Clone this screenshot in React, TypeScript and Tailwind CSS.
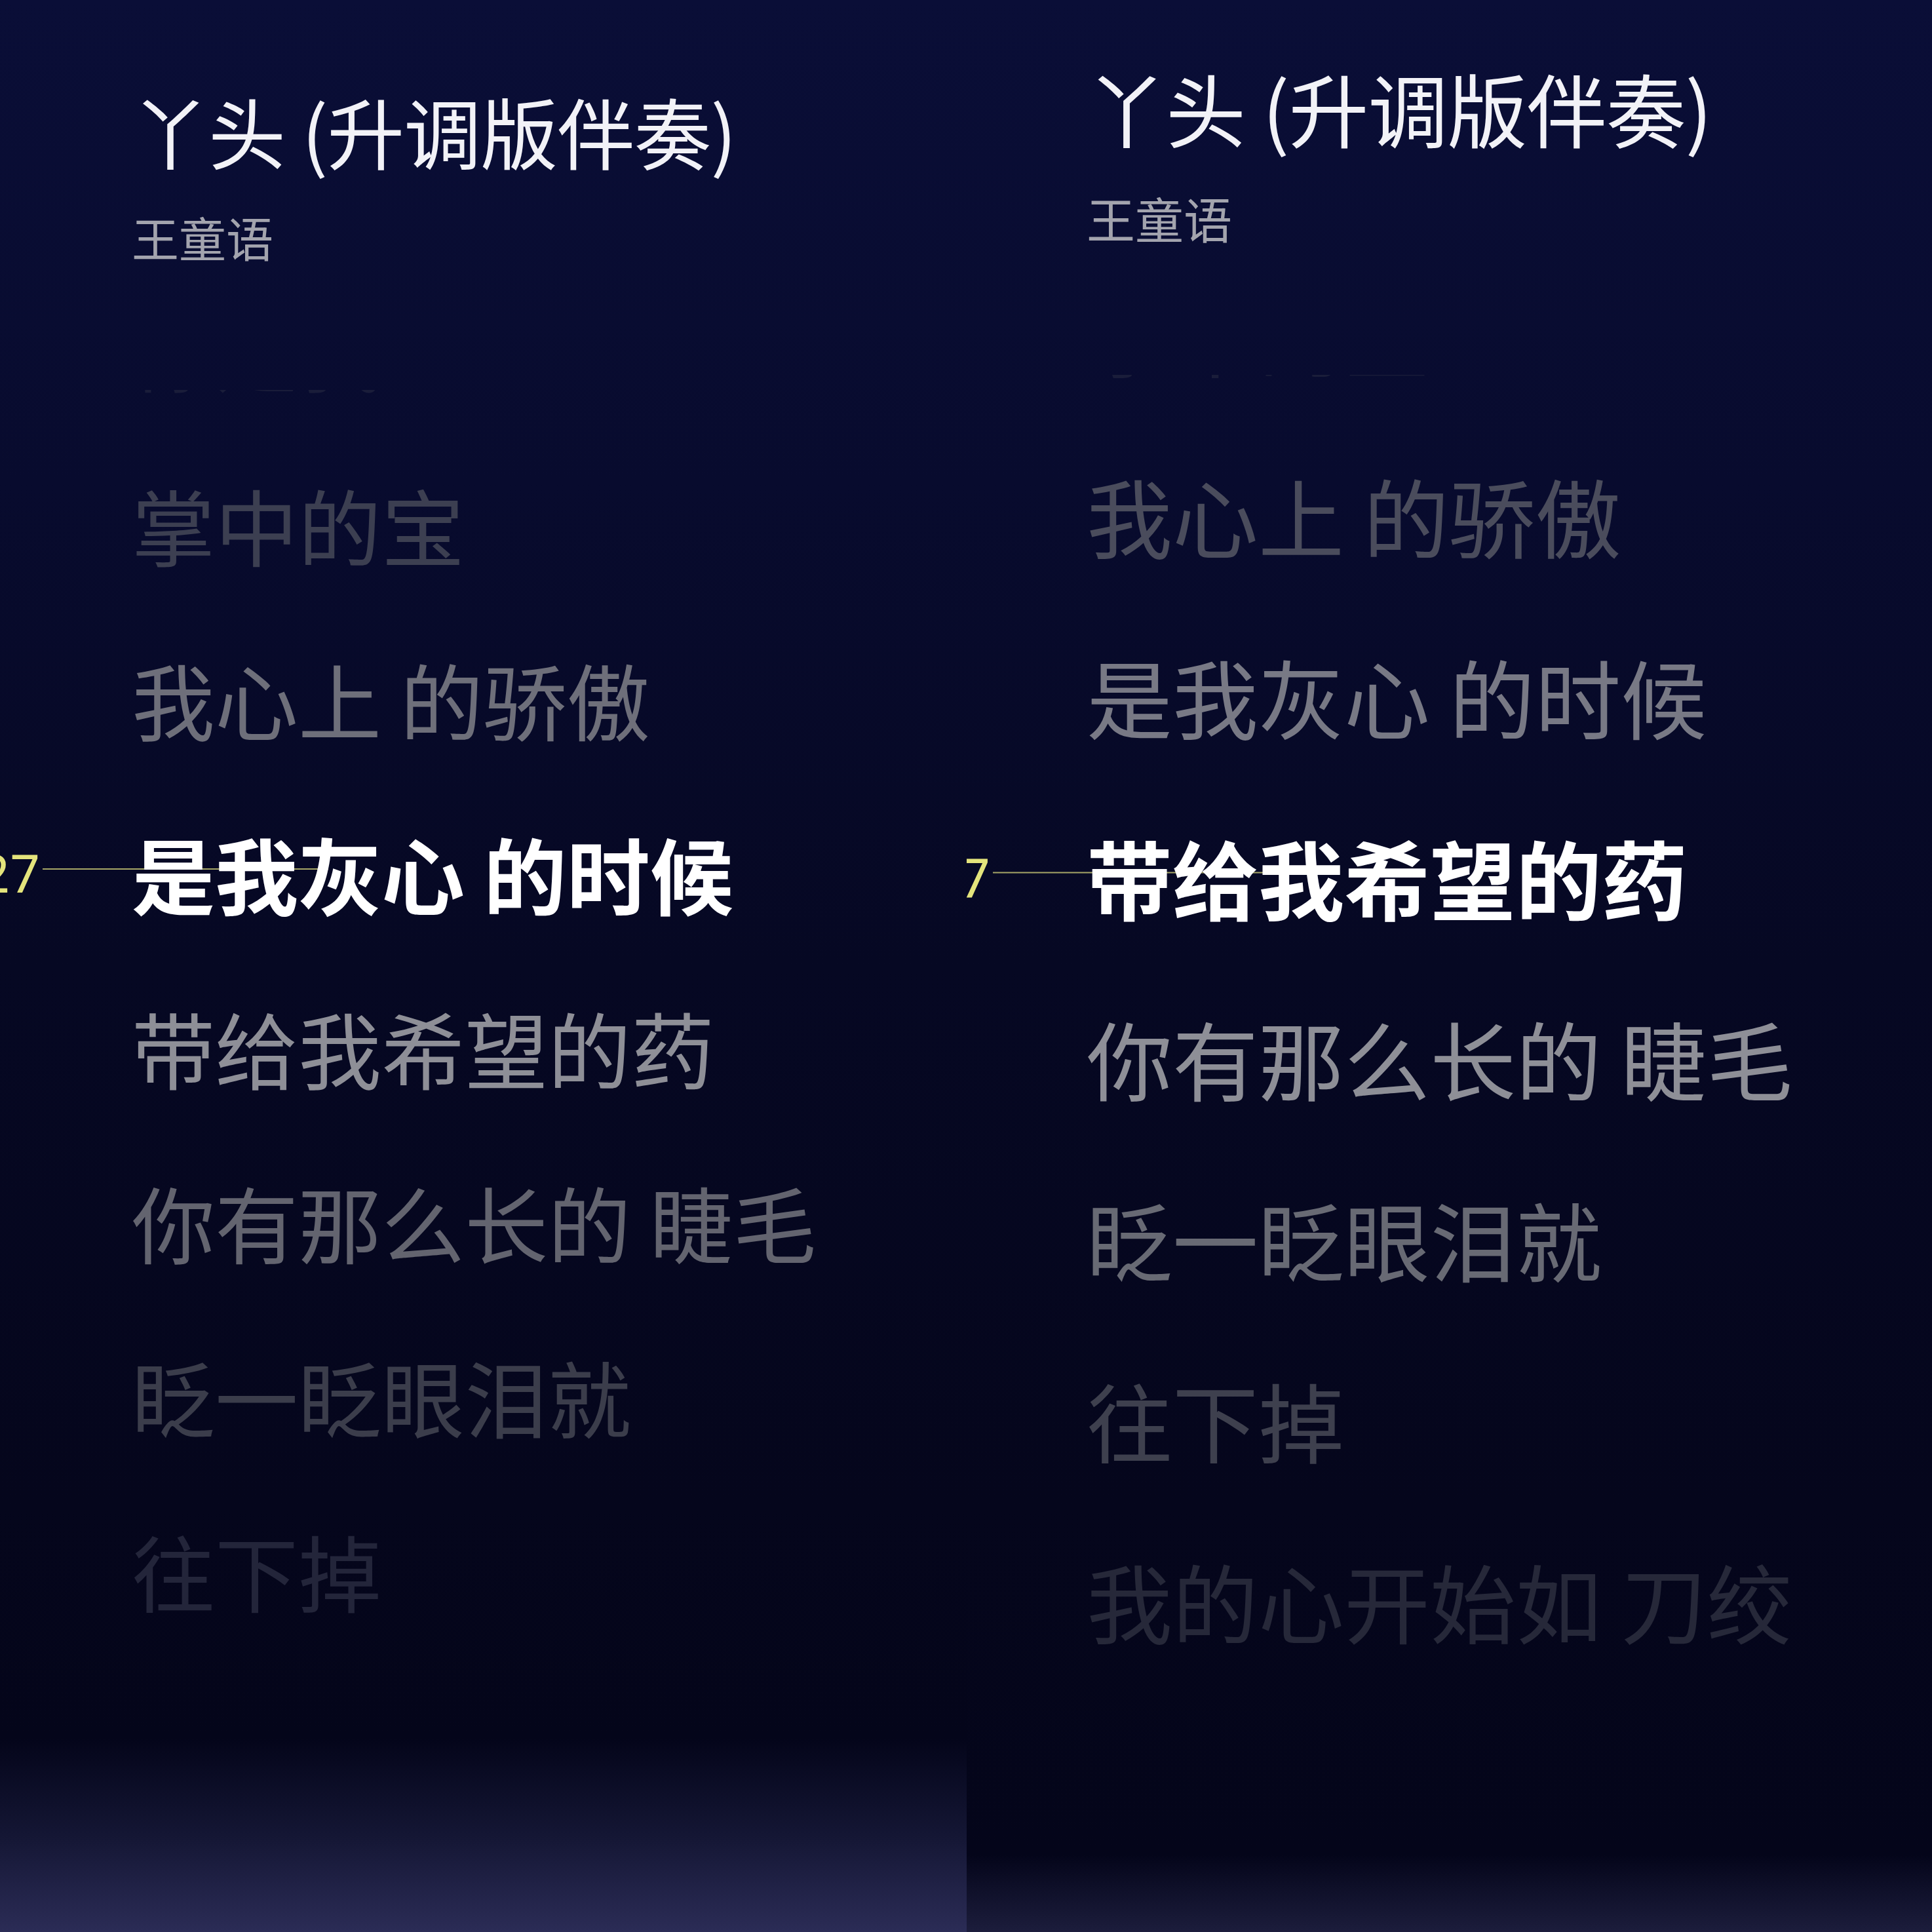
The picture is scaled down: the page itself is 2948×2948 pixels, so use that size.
import React from 'react';

interface PanelConfig {
    width: string;
    bg: string;
    header: string;
    title: string;
    artist: string;
    viewport: string;
    list: string;
    line: string;
    marker: string;
    stamp: string;
    rule: string;
    lines: { text: string; color: string }[];
    active: number;
    time: string;
}

const FONT = "font-['Noto_Sans_CJK_SC','Noto_Sans',sans-serif]";

const panels: PanelConfig[] = [
    {
        width: 'w-[1475px]',
        bg: 'bg-[linear-gradient(180deg,#0a0e37_0%,#080b2e_25%,#060823_50%,#05061c_78%,#04051a_90%,#141634_95%,#2b2c56_100%)]',
        header: 'pl-[201px] pt-[127px]',
        title: 'text-[118px] leading-[144px] tracking-[-1px]',
        artist: 'mt-[47px] text-[72px] leading-[86px]',
        viewport: 'mt-[191px] pl-[201px]',
        list: '-mt-[194px]',
        line: 'h-[266px] text-[127px] leading-[266px]',
        marker: 'right-full -mr-[300px]',
        stamp: 'text-[80px] mr-[4px]',
        rule: 'w-[436px]',
        lines: [
            { text: '你是我', color: 'text-[#1a1d3a]' },
            { text: '掌中的宝', color: 'text-[#3c3f51]' },
            { text: '我心上 的骄傲', color: 'text-[#6e6f7a]' },
            { text: '是我灰心 的时候', color: 'text-white' },
            { text: '带给我希望的药', color: 'text-[#8e8f97]' },
            { text: '你有那么长的 睫毛', color: 'text-[#63646f]' },
            { text: '眨一眨眼泪就', color: 'text-[#3b3d4b]' },
            { text: '往下掉', color: 'text-[#23253a]' },
        ],
        active: 3,
        time: '0:27',
    },
    {
        width: 'w-[1473px]',
        bg: 'bg-[linear-gradient(180deg,#0a0e37_0%,#080b2e_25%,#060823_50%,#05061c_78%,#04051a_96%,#1c1d3c_100%)]',
        header: 'pl-[183px] pt-[88px]',
        title: 'text-[122px] leading-[149px] tracking-[-1px]',
        artist: 'mt-[50px] text-[74px] leading-[89px]',
        viewport: 'mt-[196px] pl-[183px]',
        list: '-mt-[201px]',
        line: 'h-[276px] text-[131px] leading-[276px]',
        marker: 'right-full -mr-[300px]',
        stamp: 'text-[83px] mr-[4px]',
        rule: 'w-[443px]',
        lines: [
            { text: '掌中的宝', color: 'text-[#1a1d3a]' },
            { text: '我心上 的骄傲', color: 'text-[#4a4c5c]' },
            { text: '是我灰心 的时候', color: 'text-[#787985]' },
            { text: '带给我希望的药', color: 'text-white' },
            { text: '你有那么长的 睫毛', color: 'text-[#8e8f97]' },
            { text: '眨一眨眼泪就', color: 'text-[#686a74]' },
            { text: '往下掉', color: 'text-[#3e404e]' },
            { text: '我的心开始如 刀绞', color: 'text-[#262839]' },
        ],
        active: 3,
        time: '0:37',
    },
];

const LyricPanel: React.FC<{ cfg: PanelConfig }> = ({ cfg }) => (
    <div className={`${cfg.width} ${cfg.bg} h-[2948px] flex flex-col overflow-hidden ${FONT}`}>
        {/* Song header */}
        <div className={cfg.header}>
            <div className={`${cfg.title} text-[#f2f2f7] whitespace-nowrap`}>丫头 (升调版伴奏)</div>
            <div className={`${cfg.artist} text-[#a3a4ae] whitespace-nowrap`}>王童语</div>
        </div>

        {/* Lyrics viewport */}
        <div className={`${cfg.viewport} flex-1 overflow-hidden`}>
            <div className={cfg.list}>
                {cfg.lines.map((l, i) => (
                    <div key={i} className={`${cfg.line} whitespace-nowrap`}>
                        {i === cfg.active ? (
                            <span className="relative inline-block">
                                <span className={`absolute ${cfg.marker} top-1/2 -translate-y-[calc(50%+6px)] flex items-center leading-none`}>
                                    <span className={`${cfg.stamp} pt-[10px] font-['Noto_Sans',sans-serif] text-[#e4e47c]`}>
                                        {cfg.time}
                                    </span>
                                    <span className={`${cfg.rule} h-[2px] bg-[#cfcf78]/80`} />
                                </span>
                                <span className="relative font-bold text-white">{l.text}</span>
                            </span>
                        ) : (
                            <span className={l.color}>{l.text}</span>
                        )}
                    </div>
                ))}
            </div>
        </div>
    </div>
);

export default function App() {
    return (
        <div className="w-[2948px] h-[2948px] flex bg-[#04051a]">
            {panels.map((p, i) => (
                <LyricPanel key={i} cfg={p} />
            ))}
        </div>
    );
}
